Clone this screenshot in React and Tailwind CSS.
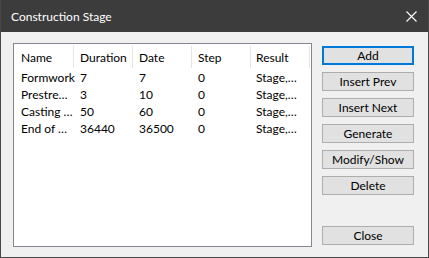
import React from "react";

const cols = [
  { label: "Name", w: "w-[60px]", pl: "pl-[7px]" },
  { label: "Duration", w: "w-[59px]", pl: "pl-[6px]" },
  { label: "Date", w: "w-[59px]", pl: "pl-[6px]" },
  { label: "Step", w: "w-[59px]", pl: "pl-[6px]" },
  { label: "Result", w: "w-[59px]", pl: "pl-[5px]" },
];

const rows = [
  ["Formwork", "7", "7", "0", "Stage,…"],
  ["Prestre…", "3", "10", "0", "Stage,…"],
  ["Casting …", "50", "60", "0", "Stage,…"],
  ["End of …", "36440", "36500", "0", "Stage,…"],
];

const buttons = ["Insert Prev", "Insert Next", "Generate", "Modify/Show", "Delete"];

function Btn({ children, def }) {
  return (
    <div
      className={
        "h-[19px] w-[92px] flex items-center justify-center bg-[#e1e1e1] text-[12px] text-black leading-[15px] " +
        (def ? "border-2 border-[#0078d7]" : "border border-[#adadad]")
      }
    >
      {children}
    </div>
  );
}

export default function App() {
  return (
    <div
      className="w-[429px] h-[258px] bg-[#f0f0f0] border-x border-b border-[#474747] flex flex-col overflow-hidden"
      style={{ fontFamily: "Lato, 'Noto Sans', sans-serif" }}
    >
      <div className="h-[32px] shrink-0 bg-[#3c3c3c] flex items-center justify-between pl-[10px] pr-[11px]">
        <span className="text-white text-[12px] leading-[16px] pt-[2px]">Construction Stage</span>
        <svg width="11" height="11" viewBox="0 0 11 11" className="shrink-0 mt-[1px]">
          <path d="M0.5 0.5 L10.5 10.5 M10.5 0.5 L0.5 10.5" stroke="white" strokeWidth="1.1" fill="none" />
        </svg>
      </div>
      <div className="flex pl-[12px] pt-[11px] gap-[10px]">
        <div className="w-[299px] h-[204px] bg-white border border-[#828790] flex flex-col">
          <div className="flex h-[25px] items-center">
            {cols.map((c, i) => (
              <div key={i} className={`${c.w} h-full flex items-center`}>
                <div className={`flex-1 ${c.pl} text-[12px] leading-[16px] text-black pt-[2px]`}>{c.label}</div>
                <div className="w-px h-[22px] bg-[#e5e5e5] self-end mb-[1px]" />
              </div>
            ))}
          </div>
          {rows.map((r, ri) => (
            <div key={ri} className="flex h-[17px] items-center pt-[1px]">
              {r.map((v, i) => (
                <div key={i} className={`${cols[i].w} ${cols[i].pl} text-[12px] leading-[16px] text-black whitespace-nowrap`}>
                  {v}
                </div>
              ))}
            </div>
          ))}
        </div>
        <div className="flex flex-col pt-[3px]">
          <Btn def>Add</Btn>
          <div className="flex flex-col gap-[7px] mt-[7px]">
            {buttons.map((b) => (
              <Btn key={b}>{b}</Btn>
            ))}
          </div>
          <div className="mt-[31px]">
            <Btn>Close</Btn>
          </div>
        </div>
      </div>
    </div>
  );
}
